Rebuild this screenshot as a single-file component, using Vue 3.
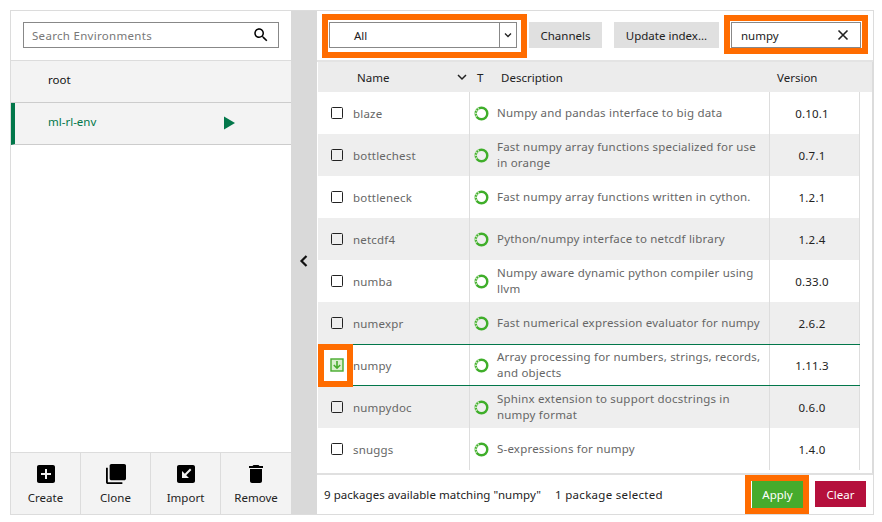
<script setup>
const rows = [
  { name: 'blaze', desc: 'Numpy and pandas interface to big data', ver: '0.10.1' },
  { name: 'bottlechest', desc: 'Fast numpy array functions specialized for use in orange', ver: '0.7.1' },
  { name: 'bottleneck', desc: 'Fast numpy array functions written in cython.', ver: '1.2.1' },
  { name: 'netcdf4', desc: 'Python/numpy interface to netcdf library', ver: '1.2.4' },
  { name: 'numba', desc: 'Numpy aware dynamic python compiler using llvm', ver: '0.33.0' },
  { name: 'numexpr', desc: 'Fast numerical expression evaluator for numpy', ver: '2.6.2' },
  { name: 'numpy', desc: 'Array processing for numbers, strings, records, and objects', ver: '1.11.3', selected: true },
  { name: 'numpydoc', desc: 'Sphinx extension to support docstrings in numpy format', ver: '0.6.0' },
  { name: 'snuggs', desc: 'S-expressions for numpy', ver: '1.4.0' }
]
const actions = [
  { label: 'Create', box: '0 0 24 24', d: 'M19 3H5c-1.11 0-2 .9-2 2v14c0 1.1.89 2 2 2h14c1.1 0 2-.9 2-2V5c0-1.1-.9-2-2-2zm-2 10h-4v4h-2v-4H7v-2h4V7h2v4h4v2z' },
  { label: 'Clone', box: '-1.2 -1.2 26.4 26.4', d: 'M3 5H1v16c0 1.1.9 2 2 2h16v-2H3V5zm18-4H7c-1.1 0-2 .9-2 2v14c0 1.1.9 2 2 2h14c1.1 0 2-.9 2-2V3c0-1.1-.9-2-2-2z' },
  { label: 'Import', box: '0 0 24 24', d: 'M5 3h14c1.1 0 2 .9 2 2v14c0 1.1-.9 2-2 2H5c-1.1 0-2-.9-2-2V5c0-1.1.9-2 2-2zm11 3.6-5.2 5.2L8 9v7h7l-2.8-2.8 5.2-5.2L16 6.6z' },
  { label: 'Remove', box: '0 0 24 24', d: 'M6 19c0 1.1.9 2 2 2h8c1.1 0 2-.9 2-2V7H6v12zM19 4h-3.5l-1-1h-5l-1 1H5v2h14V4z' }
]
</script>

<template>
  <div class="frame">
    <aside class="left">
      <div class="env-search">
        <div class="env-input">
          <span>Search Environments</span>
          <svg width="18" height="18" viewBox="0 0 24 24"><path d="M15.5 14h-.79l-.28-.27C15.41 12.59 16 11.11 16 9.5 16 5.91 13.09 3 9.5 3S3 5.91 3 9.5 5.91 16 9.5 16c1.61 0 3.09-.59 4.23-1.57l.27.28v.79l5 4.99L20.49 19l-4.99-5zm-6 0C7.01 14 5 11.99 5 9.5S7.01 5 9.5 5 14 7.01 14 9.5 11.99 14 9.5 14z" /></svg>
        </div>
      </div>
      <div class="env">root</div>
      <div class="env active">
        <span>ml-rl-env</span>
        <svg class="play" width="12" height="14" viewBox="0 0 12 14"><path d="M1 0.5 12 7 1 13.5z" fill="#02774a" /></svg>
      </div>
      <div class="spacer"></div>
      <div class="actions">
        <div v-for="a in actions" :key="a.label" class="action">
          <svg width="24" height="24" :viewBox="a.box"><path :d="a.d" /></svg>
          <span>{{ a.label }}</span>
        </div>
      </div>
    </aside>

    <div class="splitter">
      <svg width="14" height="14" viewBox="0 0 14 14"><path d="M9.5 2 4.5 7l5 5" fill="none" stroke="#111" stroke-width="2.2" /></svg>
    </div>

    <main class="right">
      <div class="toolbar">
        <div class="select box">
          <span class="select-text">All</span>
          <span class="select-arrow">
            <svg width="8" height="6" viewBox="0 0 8 6"><path d="M1 1.5 4 4.5l3-3" fill="none" stroke="#222" stroke-width="1.3" /></svg>
          </span>
          <i class="mark mark-select"></i>
        </div>
        <button class="btn channels">Channels</button>
        <button class="btn update">Update index...</button>
        <div class="pkg-search box">
          <span>numpy</span>
          <svg width="12" height="12" viewBox="0 0 12 12"><path d="M1.5 1.5l9 9M10.5 1.5l-9 9" stroke="#222" stroke-width="1.6" /></svg>
          <i class="mark mark-search"></i>
        </div>
      </div>

      <div class="table">
        <div class="thead">
          <div class="h-name">
            <span>Name</span>
            <svg width="10" height="7" viewBox="0 0 10 7"><path d="M1 1l4 4 4-4" fill="none" stroke="#222" stroke-width="1.5" /></svg>
          </div>
          <div class="h-t">T</div>
          <div class="h-desc">Description</div>
          <div class="h-ver">Version</div>
        </div>
        <div v-for="r in rows" :key="r.name" class="row" :class="{ selected: r.selected }">
          <div class="c-check">
            <svg v-if="r.selected" class="chk" width="14" height="14" viewBox="0 0 14 14">
              <rect x="1" y="1" width="12" height="12" fill="#d9efcf" stroke="#46ab2c" stroke-width="1.4" />
              <path d="M7 3v7M3.8 7 7 10.2 10.2 7" fill="none" stroke="#46ab2c" stroke-width="1.6" />
            </svg>
            <span v-else class="checkbox"></span>
            <i v-if="r.selected" class="mark mark-check"></i>
          </div>
          <div class="c-name">{{ r.name }}</div>
          <div class="c-desc">
            <svg class="ring" width="15" height="15" viewBox="0 0 15 15">
              <circle cx="7.5" cy="7.5" r="5.8" fill="none" stroke="#3fae2a" stroke-width="2.4" />
              <path d="M5 2.3A5.8 5.8 0 0 0 3.4 11.6" fill="none" stroke="#c4e6b8" stroke-width="2.4" stroke-dasharray="1.4 1.4" />
            </svg>
            <span class="desc-text">{{ r.desc }}</span>
          </div>
          <div class="c-ver">{{ r.ver }}</div>
        </div>
      </div>

      <div class="footer">
        <span class="count">9 packages available matching "numpy"</span>
        <span class="picked">1 package selected</span>
        <span class="grow"></span>
        <button class="apply">Apply<i class="mark mark-apply"></i></button>
        <button class="clear">Clear</button>
      </div>
    </main>
  </div>
</template>

<style>
html, body { margin: 0; background: #fff; }
</style>

<style scoped>
.frame {
  margin: 10px 0 0 10px;
  width: 864px;
  height: 505px;
  box-sizing: border-box;
  display: flex;
  border: 1px solid #dcdcdc;
  font-family: "Noto Sans", sans-serif;
  font-size: 11.5px;
  color: #222;
  background: #fff;
  overflow: hidden;
}
.left { width: 280px; display: flex; flex-direction: column; }
.env-search { height: 50px; padding: 11px 12px 0; box-sizing: border-box; border-bottom: 1px solid #dcdcdc; }
.env-input {
  height: 26px; box-sizing: border-box; border: 1px solid #888; display: flex; align-items: center;
  justify-content: space-between; padding: 0 8px 0 8px; color: #777; letter-spacing: .3px;
}
.env {
  height: 42px; box-sizing: border-box; background: #f3f3f3; border-bottom: 1px solid #ccc;
  padding: 0 0 4px 37px; display: flex; align-items: center; color: #111; position: relative;
}
.env.active { border-left: 4px solid #02774a; padding-left: 33px; color: #02774a; }
.play { position: absolute; left: 208px; top: 13px; }
.spacer { flex: 1; }
.actions { height: 62px; display: flex; background: #f3f3f3; border-top: 1px solid #dcdcdc; box-sizing: border-box; }
.action { width: 70px; box-sizing: border-box; display: flex; flex-direction: column; align-items: center; padding-top: 9px; border-right: 1px solid #dcdcdc; gap: 4px; }
.action:last-child { border-right: 0; }
.splitter { width: 26px; background: #d9d9d9; display: flex; align-items: center; justify-content: center; padding-bottom: 4px; box-sizing: border-box; }
.right { flex: 1; display: flex; flex-direction: column; min-width: 0; }
.toolbar { height: 51px; flex: none; padding: 11px 0 0 12px; box-sizing: border-box; display: flex; align-items: flex-start; border-bottom: 2px solid #e4e4e4; }
.box { position: relative; height: 26px; box-sizing: border-box; border: 1px solid #888; display: flex; align-items: center; background: #fff; }
.select { width: 188px; }
.select-text { flex: 1; padding-left: 24px; }
.select-arrow { width: 16px; height: 100%; border-left: 1px solid #888; display: flex; align-items: center; justify-content: center; }
.btn { height: 26px; border: 0; background: #e0e0e0; font: inherit; color: #222; padding: 0; }
.channels { width: 73px; margin-left: 12px; }
.update { width: 105px; margin-left: 12px; }
.pkg-search { width: 130px; margin-left: 12px; justify-content: space-between; padding: 0 11px 0 9px; }
.mark { position: absolute; display: block; border: 6px solid #ff6c00; box-sizing: border-box; pointer-events: none; }
.mark-select { left: -8px; right: -11px; top: -9px; bottom: -11px; }
.mark-search { left: -8px; right: -8px; top: -8px; bottom: -7px; }
.table { flex: 1; background: #fff; min-height: 0; margin-left: 1px; border-right: 1px solid #dcdcdc; }
.thead { height: 30px; background: #ececec; display: flex; align-items: center; }
.h-name { padding: 0 0 0 39px; display: flex; justify-content: space-between; align-items: center; width: 110px; }
.h-t { margin-left: 10px; width: 24px; }
.h-desc { width: 276px; }
.h-ver { width: 60px; }
.row { height: 42px; width: 542px; display: flex; box-sizing: border-box; background: #fff; }
.row:nth-child(odd) { background: #eee; }
.row.selected { background: #fff; border-top: 1px solid #02774a; border-bottom: 1px solid #02774a; }
.c-check { width: 35px; position: relative; display: flex; align-items: center; justify-content: center; }
.checkbox { width: 12px; height: 12px; border: 1.5px solid #222; border-radius: 1.5px; margin-left: 3px; margin-bottom: 1px; display: block; box-sizing: border-box; }
.chk { margin-left: 3px; margin-bottom: 1px; }
.mark-check { left: 0; top: -1px; width: 35px; height: 43px; }
.c-name { width: 117px; display: flex; align-items: center; color: #666; border-right: 1px solid #ddd; box-sizing: border-box; letter-spacing: .2px; }
.c-desc { width: 300px; display: flex; align-items: center; padding-left: 4px; box-sizing: border-box; color: #666; gap: 8px; line-height: 16px; border-right: 1px solid #ddd; letter-spacing: .2px; }
.ring { flex: none; margin-top: 1px; }
.desc-text { display: block; width: 268px; flex: none; }
.c-ver { width: 90px; display: flex; align-items: center; justify-content: center; color: #222; border-right: 1px solid #ddd; box-sizing: border-box; padding-right: 5px; letter-spacing: .2px; }
.footer { height: 41px; flex: none; border-top: 2px solid #e0e0e0; box-sizing: border-box; display: flex; align-items: flex-start; padding: 6px 7px 0 7px; }
.count, .picked { line-height: 27px; }
.count { letter-spacing: .05px; }
.picked { margin-left: 14px; letter-spacing: .3px; }
.grow { flex: 1; }
.apply, .clear { border: 0; font: inherit; color: #fff; padding: 0; position: relative; width: 51px; }
.apply { height: 27px; background: #46ab2c; box-shadow: -1px 1px 0 #fff; }
.clear { height: 26px; background: #b5103c; margin-left: 12px; }
.mark-apply { left: -7px; right: -6px; top: -6px; bottom: -6px; }
</style>
